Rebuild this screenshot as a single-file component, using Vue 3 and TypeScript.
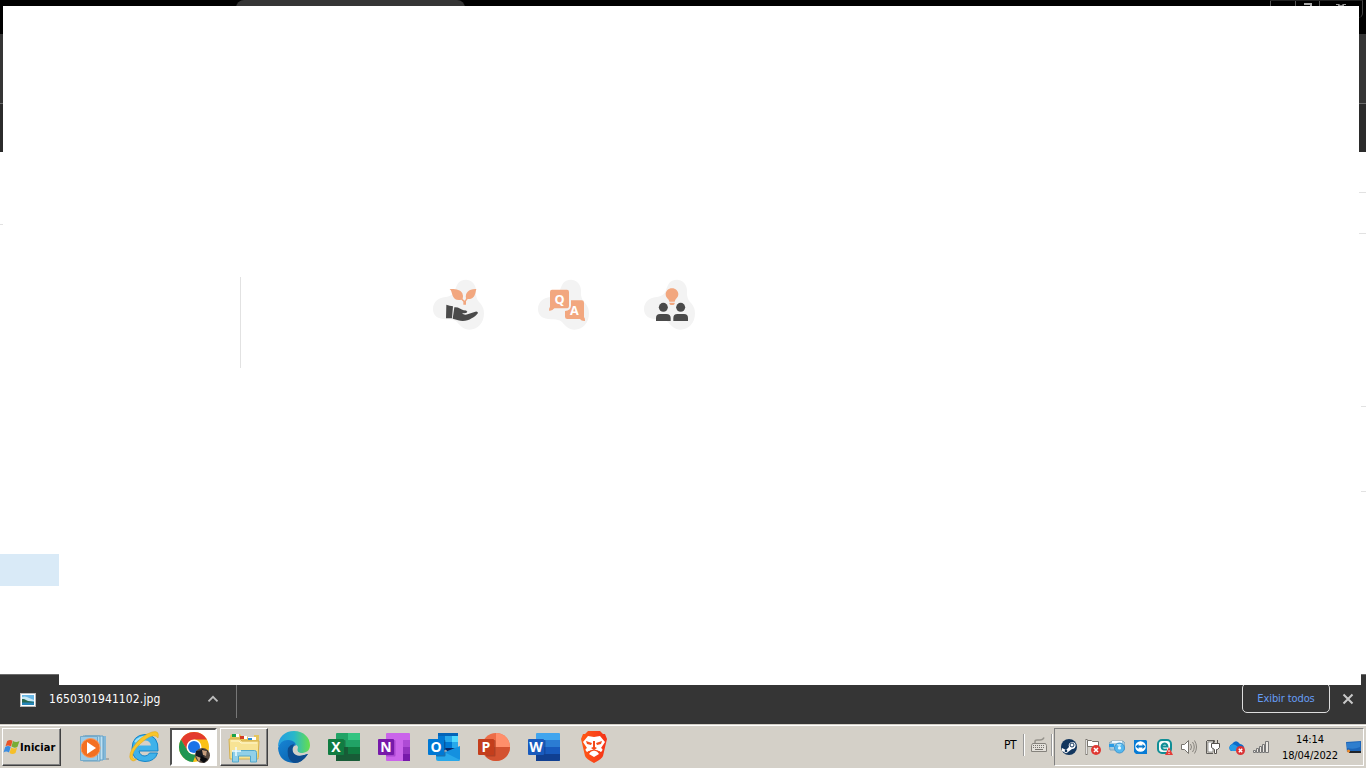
<script setup lang="ts">
interface OfficeApp {
  name: string
  letter: string
  tile: string
  shadow: string
}

const officeApps: OfficeApp[] = [
  { name: 'excel', letter: 'X', tile: '#107c41', shadow: '#185c37' },
  { name: 'onenote', letter: 'N', tile: '#7719aa', shadow: '#9332bf' },
  { name: 'outlook', letter: 'O', tile: '#0078d4', shadow: '#0a4f91' },
  { name: 'powerpoint', letter: 'P', tile: '#c43e1c', shadow: '#9c351d' },
  { name: 'word', letter: 'W', tile: '#185abd', shadow: '#103f91' },
]

const blob =
  'M101 2C118 2 132 16 132 34C132 50 132 59 142 70C150 79 156 88 156 103C156 132 137 152 112 152C95 152 85 140 75 129C68 122 55 122 42 121C18 120 3 111 3 90C3 70 18 58 36 55C55 52 62 50 69 34C75 12 84 2 101 2Z'
</script>

<template>
  <div class="desktop">
    <header class="titlebar">
      <div class="tab"></div>
      <div class="caption">
        <span></span>
        <span><svg width="10" height="6"><path d="M1 2h8v4H7V4H1z" fill="#aaa" /></svg></span>
        <span class="close"><svg width="10" height="3"><path d="M0 0h3l2 1.500L7 0h3v1H8v2H2V1H0z" fill="#999" /></svg></span>
      </div>
    </header>
    <div class="toolbar"></div>
    <div class="bookmarks"></div>

    <main class="page">
      <div class="edge-lines"><i class="a"></i><i class="b"></i><i class="c"></i><i class="d"></i></div>
      <div class="selected"></div>
    </main>

    <div class="downloads">
      <svg class="thumb" width="16" height="14" viewBox="0 0 16 14">
        <rect width="16" height="14" fill="#b9b9b9" /><rect x="1" y="1" width="14" height="12" fill="#fff" />
        <rect x="2" y="2" width="12" height="10" fill="#69b7e5" />
        <path d="M2 4q3-1 5 0t7 3v1H2z" fill="#c9e9f5" /><path d="M2 6h2l4 2 6 1v1H2z" fill="#28694f" />
        <path d="M2 9.500h12V12H2z" fill="#2685b8" />
      </svg>
      <span class="filename">1650301941102.jpg</span>
      <svg class="chevron" width="12" height="8" viewBox="0 0 12 8"><path d="M1.500 6.300L6 1.800l4.500 4.500" fill="none" stroke="#bdbdbd" stroke-width="1.800" /></svg>
      <div class="divider"></div>
      <button class="show-all">Exibir todos</button>
      <svg class="dismiss" width="12" height="12" viewBox="0 0 12 12"><path d="M1.500 1.500l9 9m0-9l-9 9" stroke="#c8c8c8" stroke-width="2" /></svg>
    </div>

    <section class="ghost">
      <div class="rule"></div>
      <div class="features">
        <svg viewBox="0 0 162 156">
          <path :d="blob" fill="#f3f3f3" />
          <path d="M53 30C68 29 86 31 91 43Q95 52 92 60L98 65Q101 63 102 58C99 41 110 29 133 30C130 40 130 55 117 59Q111 61 107 60L102 67V77H94V68L88 62C75 66 66 60 62 50C58 40 59 35 53 30Z" fill="#f2a77f" />
          <path d="M43 77Q53 80 63 82L60 118H42ZM67 85C79 83 86 91 95 94Q104 94 106 98Q105 103 90 103Q97 110 109 105L130 98Q137 96 138 102C129 114 112 125 92 126C83 126 74 121 62 119Z" fill="#4a4a4a" />
        </svg>
        <svg class="questions" viewBox="0 0 162 156">
          <path :d="blob" fill="#f3f3f3" />
          <path d="M45 32H90Q96 32 96 39V80Q96 88 88 88H52Q46 96 37 96Q34 91 39 83V39Q39 32 45 32Z" fill="#f2a77f" />
          <path d="M102 64H134Q141 64 141 71V114Q145 119 144 126Q133 127 129 120H91Q84 120 84 113V96Q101 94 102 80Z" fill="#f2a77f" />
          <text x="67.500" y="75" text-anchor="middle" class="qa">Q</text>
          <text x="112" y="108" text-anchor="middle" class="qa">A</text>
        </svg>
        <svg viewBox="0 0 162 156">
          <path :d="blob" fill="#f3f3f3" />
          <path d="M87 28C98 28 106 36 106 46C106 53 101 58 97 62L95 68H79L77 62C72 58 68 53 68 46C68 36 76 28 87 28ZM79 71H95Q96 78 87 78Q78 78 79 71Z" fill="#f2a77f" />
          <g fill="#4a4a4a"><circle cx="61" cy="85" r="13.500" /><circle cx="113" cy="85" r="13.500" /><path d="M39 126V117Q39 105 51 105H70Q83 105 83 117V126ZM91 126V117Q91 105 103 105H123Q135 105 135 117V126Z" /></g>
        </svg>
      </div>
    </section>
    <div class="ghost-lower"></div>

    <footer class="taskbar">
      <button class="start">
        <svg width="17" height="17" viewBox="0 0 17 17">
          <path d="M4.200 2q3-2 5.300-.2L8 7.500q-3-2-5.500-.3z" fill="#e85328" /><path d="M10 2q3 2 6.500 0l-2 5.700q-3 2-6-.2z" fill="#78ad35" />
          <path d="M2.200 8q3-2 5.500 0L6 13.500q-3-2-5.500 0z" fill="#3b8de0" /><path d="M8.200 8.500q3 2 6 0L12.500 14q-3 2-6 0z" fill="#f6bf28" />
        </svg>
        <b>Iniciar</b>
      </button>

      <nav class="apps">
        <div class="slot">
          <svg viewBox="0 0 32 32">
            <path d="M9 5h19v24H9z" fill="#84b8d8" /><path d="M7 5h18v24H7z" fill="#bde0f2" stroke="#639fc6" /><path d="M5 5h17v25H5z" fill="#b1d9ef" stroke="#659fc3" />
            <path d="M2.500 5.500h17v24h-17z" fill="#9ccbe7" stroke="#73aaca" /><path d="M28 27h3v2h-3z" fill="#aaa9a5" />
            <circle cx="12.500" cy="17" r="9.500" fill="#f37021" stroke="#fc995a" /><path d="M9 11l9 6-9 6z" fill="#fff" />
          </svg>
        </div>
        <div class="slot">
          <svg viewBox="0 0 32 32">
            <path d="M30 20H11Q12 25 17 25Q20 25 21.500 22H29.500Q27 30.500 17 30.500Q4 30 4 17.500Q4.500 4 17 3.500Q31 4 30 20Z" fill="#3fb2ea" stroke="#1485c9" />
            <path d="M11 14.500Q12 9.500 17 9.500Q22 9.500 23 14.500Z" fill="#d4d0c8" /><path d="M7 11Q12 5 20 6" stroke="#9be2fb" stroke-width="2" fill="none" />
            <path d="M5 30Q-1 28 4 18Q13 4 24 1Q32-1 30 7Q27 2 18 8Q6 17 4.500 24Q4 29 9 28Q7 30 5 30Z" fill="#f7c52c" stroke="#e2a413" stroke-width=".5" />
          </svg>
        </div>
        <div class="slot active">
          <svg viewBox="0 0 32 32">
            <circle cx="16" cy="16" r="15" fill="#fbc116" /><path d="M3 8.500A15 15 0 0 1 29 8.500H16L9.500 20Z" fill="#e33b2e" /><path d="M3 8.500L9.500 19.700Q13 24 18 23L15 31A15 15 0 0 1 3 8.500Z" fill="#219653" />
            <circle cx="16" cy="16" r="7.500" fill="#fff" /><circle cx="16" cy="16" r="6" fill="#1a73e8" />
            <circle cx="24.500" cy="24.500" r="7.500" fill="#56483e" /><path d="M18 20q5 0 6-2l6 2q-2 3-3 5l-4 2-5-2z" fill="#171b22" /><path d="M24 19l5 1-1 5-3-1zM18 25l5 2-2 4z" fill="#c69e7d" /><path d="M23 25l7 3-4 4-4-3z" fill="#090a0d" />
          </svg>
        </div>
        <div class="slot raised">
          <svg viewBox="0 0 32 32">
            <path d="M2 6q0-3 3-3h7l2 3h3l2 0h7V4h5v22H2z" fill="#e5c55b" />
            <path d="M4 3h7v3H4zM12 5h7v3h-7zM20 6h8v3h-8z" fill="#fff" /><path d="M4 3h4v3H4z" fill="#1aa34a" /><path d="M12 5h4v3h-4z" fill="#d33c22" /><path d="M20 7h4v2h-4z" fill="#278ed5" />
            <path d="M1 8h11l2 2h17l-1 18H2z" fill="#f7e394" stroke="#d5b04c" /><path d="M3 10h8l2 2h16" stroke="#fff8cf" fill="none" />
            <path d="M4.500 31V21.500q0-2 2-2h20q2 0 2 2V31h-6v-6h-12v6z" fill="#91d0e8" stroke="#54a8cb" /><path d="M8 16v9M4 20h9" stroke="#effcff" stroke-width="1.500" />
          </svg>
        </div>
        <div class="slot">
          <svg viewBox="0 0 32 32">
            <defs>
              <linearGradient id="edge-top"><stop stop-color="#249ce1" /><stop offset=".5" stop-color="#28b7ca" /><stop offset="1" stop-color="#67df4b" /></linearGradient>
              <linearGradient id="edge-low" y2="1"><stop stop-color="#1785d5" /><stop offset="1" stop-color="#075aa5" /></linearGradient>
            </defs>
            <path d="M0 16C0 6 7 0 16 0C26 0 32 7 32 14C32 20 28 22 23 22Q18 21 19 18Q19 10 9 10Q3 11 0 16Z" fill="url(#edge-top)" />
            <path d="M0 17Q3 8 11 9Q18 10 18 15Q14 16 15 20Q18 27 30 23Q24 32 16 32Q1 31 0 17Z" fill="url(#edge-low)" />
            <path d="M10 25Q8 14 16 13Q14 17 15 20Q18 27 30 23Q24 32 17 32Q12 31 10 25Z" fill="#0d4c8e" /><path d="M16 15Q19 13 20 16Q19 19 20 21Q23 24 30 22Q19 28 15 21Q14 17 16 15Z" fill="#d4d0c8" />
          </svg>
        </div>
        <div v-for="app in officeApps" :key="app.name" class="slot">
          <svg viewBox="0 0 32 32">
            <g v-if="app.name === 'excel'"><rect x="8" y="2" width="24" height="28" rx="1" fill="#21a366" /><path d="M20 2h11q1 0 1 1v6H20z" fill="#33c481" /><path d="M20 16h12v7H20z" fill="#107c41" /><path d="M8 16h12v7h12v6q0 1-1 1H8z" fill="#185c37" /></g>
            <g v-else-if="app.name === 'onenote'"><rect x="8" y="2" width="24" height="28" rx="1" fill="#ca64ea" /><path d="M25 9h7v7h-7z" fill="#ae4bd5" /><path d="M25 16h7v7h-7z" fill="#9332bf" /><path d="M25 23h7v7h-7z" fill="#7719aa" /></g>
            <g v-else-if="app.name === 'outlook'"><path d="M10 2h20v17H10z" fill="#0364b8" /><path d="M10 5h7v6h-7z" fill="#0078d4" /><path d="M17 5h7v6h-7z" fill="#28a8ea" /><path d="M24 5h6v6h-6z" fill="#50d9ff" /><path d="M17 11h7v6h-7z" fill="#0078d4" /><path d="M24 11h6v6h-6z" fill="#28a8ea" /><path d="M17 17h10l-7 5z" fill="#0a2767" /><path d="M32 15v13q0 2-2 2H20l-3-9z" fill="#1490df" /><path d="M8 17l24 12q-1 1-2 1H10q-2 0-2-2z" fill="#28a8ea" /></g>
            <g v-else-if="app.name === 'powerpoint'"><circle cx="18" cy="16" r="14" fill="#ed6c47" /><path d="M18 2A14 14 0 0 1 32 16H18Z" fill="#ff8f6b" /><path d="M4 16H32A14 14 0 0 1 4 16Z" fill="#d35230" /></g>
            <g v-else><rect x="8" y="2" width="24" height="28" rx="1" fill="#41a5ee" /><path d="M8 9h24v7H8z" fill="#2b7cd3" /><path d="M8 16h24v7H8z" fill="#185abd" /><path d="M8 23h24v6q0 1-1 1H8z" fill="#103f91" /></g>
            <rect x="8" y="9" width="9.500" height="16.500" rx="1" :fill="app.shadow" opacity=".6" />
            <rect y="8" width="16" height="16" rx="1" :fill="app.tile" />
            <text x="8" y="21" text-anchor="middle" class="office-letter">{{ app.letter }}</text>
          </svg>
        </div>
        <div class="slot">
          <svg viewBox="0 0 32 32">
            <defs><linearGradient id="brave"><stop stop-color="#ff5a16" /><stop offset="1" stop-color="#f53118" /></linearGradient></defs>
            <path d="M10 0h12l3 3h2l2 5-1 4-3 13q-1 3-9 7-8-4-9-7L4 12 3 8l2-5h2z" fill="url(#brave)" />
            <path d="M10 5l6 1 6-1 5 6-4 6q3 1 0 4l-5-2 3 4-5 3-5-3 3-4-5 2q-3-3 0-4L5 11z" fill="#fff" />
            <path d="M8 10l6 2-1 2-4-1zM24 10l-6 2 1 2 4-1zM15 10h2v6l2 1-3 2-3-2 2-1z" fill="#f54b1a" /><path d="M10 21l6-2 6 2" fill="none" stroke="#f54b1a" stroke-width="1.200" />
          </svg>
        </div>
      </nav>

      <div class="language"><span>PT</span><i></i>
        <svg width="16" height="17" viewBox="0 0 16 17"><path d="M4 6V4.500q0-1.500 2-1.500h3q3 0 4-2.500" stroke="#96938c" stroke-width="1.500" fill="none" /><path d="M1.500 6.500h13l1 2v6h-15v-6z" fill="#e3e0da" stroke="#85827c" /><path d="M2 8.500h12M2 10.500h12" stroke="#77746f" stroke-dasharray="1 1" /><path d="M4 12.500h8" stroke="#77746f" /></svg>
        <i class="second"></i>
      </div>

      <div class="tray">
        <div class="tray-icons">
          <svg viewBox="0 0 16 16"><circle cx="8" cy="8" r="8" fill="#12365e" /><path d="M1 9l4 2 3-3a3.500 3.500 0 1 1 3 2l-4 3a2.300 2.300 0 0 1-4 0l-2-1z" fill="#fff" /><circle cx="11" cy="6" r="2" fill="#fff" stroke="#12365e" /><circle cx="5" cy="12" r="1.300" fill="#12365e" /></svg>
          <svg viewBox="0 0 16 16"><path d="M1.500 0v16" stroke="#77736d" stroke-width="2" /><path d="M1.500 1v14" stroke="#fff" stroke-width=".8" /><path d="M2.500 1.500h4l1 1h6v6h-5l-1-1h-5z" fill="#fff" stroke="#77736d" /><circle cx="11" cy="11" r="5" fill="#df3933" /><path d="M9 9l4 4m0-4l-4 4" stroke="#fff" stroke-width="1.600" /></svg>
          <svg viewBox="0 0 16 16"><path d="M0 4l3-2h11l2 2-1 7H1z" fill="#a7c9db" stroke="#86a8bb" /><path d="M3 3h10" stroke="#eef8ff" stroke-width="2" /><path d="M0 5h5v3H0z" fill="#299be4" /><circle cx="10.500" cy="9" r="5" fill="#55b8ef" stroke="#3f96cf" /><path d="M10.500 9l-3-4 5 0z" fill="#a9e1fb" /><circle cx="10.500" cy="9" r="1.600" fill="#e9f9ff" /></svg>
          <svg viewBox="0 0 16 16"><path d="M1 1h12l1 1v13H3l-2-2z" fill="#077bd5" /><circle cx="7.500" cy="7.500" r="5.300" fill="#fff" /><path d="M2.500 7.500l3-2.500v1.500h4V5l3 2.500-3 2.500V8.500h-4V10z" fill="#0779ce" /></svg>
          <svg viewBox="0 0 16 16"><rect x="1" y="1" width="13" height="13" rx="4" fill="#f4faf9" stroke="#108e96" stroke-width="2" /><path d="M5 7.500h5.500Q10 4.500 7.500 4.500Q4.500 5 4.500 8Q5 11.500 10 10.500" fill="none" stroke="#108e96" stroke-width="1.800" /><path d="M12 8l4 8H8z" fill="#e43c38" /><path d="M12 11v2m0 1v1" stroke="#fff" /></svg>
          <svg viewBox="0 0 16 16"><path d="M.5 5.500h3l4-4v13l-4-4h-3z" fill="#fff" stroke="#77746e" /><path d="M9.500 5q2 3 0 6M11.500 3q3.500 5 0 10M13.500 1.500q4 6.500 0 13" stroke="#86837d" fill="none" /></svg>
          <svg viewBox="0 0 16 16"><path d="M2 1.500h7.500v2M8 14.500H1.500V2" stroke="#5d5b58" fill="none" /><path d="M3 3h5v10H3z" fill="#fff" stroke="#5d5b58" stroke-width=".6" /><path d="M6.500 4.500h8v4l-2 2h-1v4h-2v-4l-3-2z" fill="#fff" stroke="#56534f" /><path d="M8.500 1v4m4-4v4" stroke="#56534f" /></svg>
          <svg viewBox="0 0 16 16"><path d="M2 12a4 4 0 0 1 1-7Q7-.5 11 5Q16 6 15 11L9 12Z" fill="#0c6bc9" /><path d="M1 7Q4 3 9 8L12 12H3Q-1 10 1 7" fill="#259ce7" /><circle cx="11.500" cy="11.500" r="4.500" fill="#da3436" /><path d="M9.800 9.800l3.400 3.400m0-3.400l-3.400 3.400" stroke="#fff" stroke-width="1.500" /></svg>
          <svg viewBox="0 0 16 16"><path d="M.5 11.500h2v2h-2zM3.500 9.500h2v4h-2zM6.500 7.500h2v6h-2zM9.500 5.500h2v8h-2zM12.500 2.500h3v11h-3z" fill="#ece9e4" stroke="#777" /></svg>
        </div>
        <time class="clock"><span>14:14</span><span>18/04/2022</span></time>
        <svg class="show-desktop" width="16" height="13" viewBox="0 0 16 13"><path d="M0 1l15-1v11H1z" fill="#1c65b8" /><path d="M1 2l13-1v5Q8 9 1 7z" fill="#2f7ece" /><path d="M3 10h12v2H3z" fill="#20242a" /><circle cx="2.500" cy="10" r="1.500" fill="#f28a27" /></svg>
      </div>
    </footer>
  </div>
</template>

<style>
body { margin: 0; overflow: hidden; }
</style>
<style scoped>
* { box-sizing: border-box; }
.desktop { position: relative; display: flex; flex-direction: column; width: 1366px; height: 768px; overflow: hidden; background: #fff; font-family: "DejaVu Sans Condensed", "DejaVu Sans", sans-serif; font-stretch: condensed; }
svg { display: block; flex: none; }
button { font: inherit; }
.titlebar { height: 34px; flex: none; background: #000; display: flex; }
.tab { width: 229px; height: 34px; margin-left: 236px; border-radius: 8px 8px 0 0; background: #353535; }
.caption { display: flex; width: 93px; height: 18px; margin-left: auto; margin-right: 3px; border-top: 1px solid #222; border-right: 1px solid #444; border-radius: 0 0 5px; }
.caption span { width: 25px; border-left: 1px solid #555; display: flex; justify-content: center; }
.caption .close { width: 43px; padding-top: 3px; }
.toolbar { height: 70px; flex: none; background: #353535; border-bottom: 1px solid #6b6b6b; }
.bookmarks { height: 48px; flex: none; background: #2b2b2b; }
.page { height: 522px; flex: none; display: flex; flex-direction: column; }
.edge-lines { display: grid; height: 402px; grid-template-rows: 40px 31px 10px 173px 85px 1fr; }
.edge-lines i { grid-column: 1; width: 7px; border-bottom: 1px solid #e2e2e2; justify-self: end; }
.edge-lines .a { grid-row: 1; height: 41px; }
.edge-lines .b { grid-row: 1 / 4; height: 82px; }
.edge-lines .c { grid-row: 1 / 5; width: 5px; height: 255px; }
.edge-lines .d { grid-row: 1 / 6; width: 5px; height: 340px; }
.edge-lines::before { content: ""; grid-row: 1 / 3; grid-column: 1; width: 3px; height: 72px; border-bottom: 1px solid #e2e2e2; }
.edge-lines::before { height: 71px; align-self: start; margin-top: 1px; }
.edge-lines::before { margin-top: 0; height: 72px; }
.selected { width: 59px; height: 32px; background: #d9eaf7; }
.downloads { height: 50px; flex: none; display: flex; background: #353535; border-top: 1px solid #6b6b6b; color: #fff; }
.thumb { margin: 18px 0 0 20px; }
.filename { width: 111px; margin: 16px 0 0 13px; font-size: 12px; line-height: 16px; letter-spacing: .12px; white-space: nowrap; }
.chevron { margin: 20px 0 0 47px; }
.divider { width: 1px; height: 33px; margin: 10px 0 0 17px; background: #777; }
.show-all { width: 88px; height: 30px; margin: 8px 0 0 auto; padding: 1px 0 0; border: 1px solid #ddd; border-radius: 5px; background: transparent; color: #669df6; font-size: 11px; line-height: 27px; letter-spacing: -.1px; }
.dismiss { margin: 18px 12px 0; }
.ghost { position: absolute; left: 3px; top: 6px; width: 1356px; height: 548px; background: #fff; display: flex; align-items: flex-start; padding: 271px 0 0 237px; }
.ghost-lower { position: absolute; left: 59px; top: 554px; width: 1302px; height: 131px; background: #fff; }
.rule { width: 1px; height: 91px; background: #e2e2e2; }
.features { display: flex; margin: 2px 0 0 191px; }
.features svg { width: 54px; height: 52px; }
.features .questions { margin: 0 52px 0 51px; }
.qa { font: bold 38px "Open Sans", sans-serif; fill: #fff; }
.taskbar { height: 44px; flex: none; display: flex; align-items: flex-start; background: #d4d0c8; box-shadow: inset 0 1px #d4d0c8, inset 0 2px #fff; color: #000; padding-top: 4px; }
.start { width: 59px; height: 38px; margin-left: 2px; padding: 0; border: 1px solid; border-color: #fff #404040 #404040 #fff; box-shadow: inset -1px -1px #808080; background: #d4d0c8; display: flex; align-items: center; color: #000; }
.start b { font-size: 11px; letter-spacing: .08px; }
.apps { display: flex; margin-left: 8px; }
.slot { width: 50px; height: 38px; display: flex; align-items: center; justify-content: center; }
.slot svg { width: 32px; height: 32px; }
.active { width: 47px; margin: 0 1px; border: 2px solid; border-color: #505050 #fff #fff #505050; background: #fff; }
.raised { width: 48px; margin: 0 1px 0 2px; border: 1px solid; border-color: #fff #404040 #404040 #fff; box-shadow: inset -1px -1px #808080; background: #d4d0c8; }
.office-letter { font: bold 14px "Open Sans", sans-serif; fill: #fff; }
.language { display: flex; margin-left: auto; height: 38px; align-items: center; width: 50px; }
.language span { width: 19px; font-size: 12px; letter-spacing: -.5px; padding-bottom: 4px; }
.language i { width: 2px; height: 22px; border-left: 1px solid #999; background: #fff; margin-bottom: 5px; }
.language svg { margin: 0 4px 4px 6px; }
.tray { width: 310px; height: 38px; margin-right: 2px; border: 1px solid; border-color: #808080 #fff #fff #808080; display: flex; align-items: center; }
.tray-icons { display: flex; gap: 8px; margin-left: 6px; }
.tray-icons svg { width: 16px; height: 16px; }
.clock { width: 60px; margin-left: 11px; padding-top: 2px; display: flex; flex-direction: column; align-items: center; font-size: 11px; line-height: 16px; letter-spacing: -.1px; }
.show-desktop { margin-left: 6px; }
</style>
